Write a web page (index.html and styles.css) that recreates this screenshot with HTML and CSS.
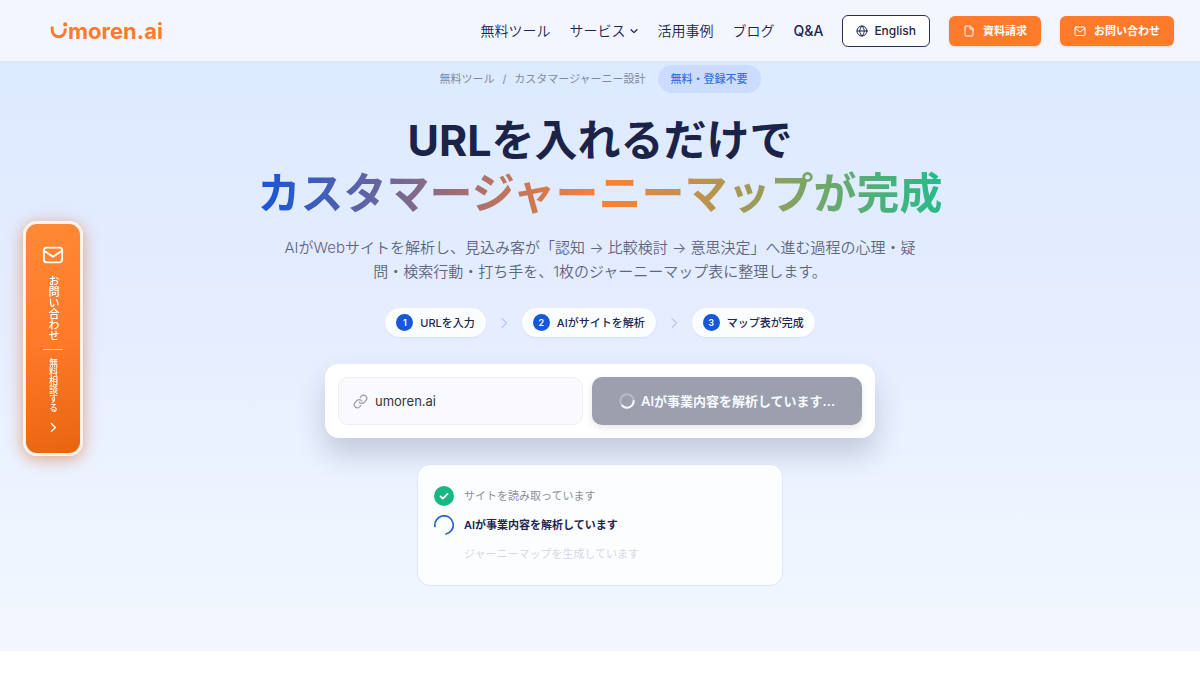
FILE: index.html
```html
<!DOCTYPE html>
<html lang="ja">
<head>
<meta charset="utf-8">
<meta name="viewport" content="width=device-width, initial-scale=1">
<title>カスタマージャーニー設計 | umoren.ai</title>
<link rel="stylesheet" href="styles.css">
</head>
<body>
<header class="header">
  <a class="logo" href="#" aria-label="umoren.ai">
    <svg class="logo-mark" viewBox="0 0 18 18" aria-hidden="true"><path class="logo-curve" d="M2.200 4.500v3.800a6.500 6.500 0 0 0 13 0V6.500"/><circle cx="15.200" cy="2.400" r="2.100" fill="currentColor"/></svg>
    <span>moren.ai</span>
  </a>
  <nav class="nav" aria-label="メイン">
    <a href="#">無料ツール</a>
    <a class="has-menu" href="#">サービス<svg class="icon-caret" viewBox="0 0 24 24" aria-hidden="true"><path d="m5 9 7 7 7-7"/></svg></a>
    <a href="#">活用事例</a>
    <a href="#">ブログ</a>
    <a class="latin" href="#">Q&amp;A</a>
    <a class="btn btn-outline" href="#"><svg viewBox="0 0 24 24" aria-hidden="true"><circle cx="12" cy="12" r="10"/><path d="M2 12h20M12 2c-6 5.500-6 14.500 0 20M12 2c6 5.500 6 14.500 0 20"/></svg>English</a>
    <a class="btn btn-orange" href="#"><svg viewBox="0 0 24 24" aria-hidden="true"><path d="M14 2H6a2 2 0 0 0-2 2v16a2 2 0 0 0 2 2h12a2 2 0 0 0 2-2V8zM14 2v6h6"/></svg>資料請求</a>
    <a class="btn btn-orange" href="#"><svg viewBox="0 0 24 24" aria-hidden="true"><rect x="2" y="4" width="20" height="17" rx="2"/><path d="m3 7 9 7 9-7"/></svg>お問い合わせ</a>
  </nav>
</header>

<main class="hero">
  <div class="crumbs">
    <a href="#">無料ツール</a><span>/</span><span>カスタマージャーニー設計</span><strong class="badge">無料・登録不要</strong>
  </div>
  <h1 class="title">URLを入れるだけで<br><span class="title-gradient">カスタマージャーニーマップが完成</span></h1>
  <p class="lead">AIがWebサイトを解析し、見込み客が「認知 → 比較検討 → 意思決定」へ進む過程の心理・疑問・検索行動・打ち手を、1枚のジャーニーマップ表に整理します。</p>
  <ol class="steps">
    <li class="step"><b>1</b>URLを入力</li>
    <li class="arrow" aria-hidden="true"><svg viewBox="0 0 24 24"><path d="m8 3 9 9-9 9"/></svg></li>
    <li class="step"><b>2</b>AIがサイトを解析</li>
    <li class="arrow" aria-hidden="true"><svg viewBox="0 0 24 24"><path d="m8 3 9 9-9 9"/></svg></li>
    <li class="step"><b>3</b>マップ表が完成</li>
  </ol>
  <form class="form">
    <label class="field">
      <svg viewBox="0 0 24 24" aria-hidden="true"><path d="M10 13a5 5 0 0 0 7.540.540l3-3a5 5 0 0 0-7.070-7.070l-1.720 1.710M14 11a5 5 0 0 0-7.540-.540l-3 3a5 5 0 0 0 7.070 7.070l1.710-1.710"/></svg>
      <input type="text" value="umoren.ai" aria-label="サイトURL">
    </label>
    <button class="submit" type="button"><svg viewBox="0 0 24 24" aria-hidden="true"><circle cx="12" cy="12" r="10" opacity=".3"/><path d="M22 12a10 10 0 0 1-17 7"/></svg>AIが事業内容を解析しています...</button>
  </form>
  <ul class="progress">
    <li class="done"><svg viewBox="0 0 20 20" aria-hidden="true"><circle cx="10" cy="10" r="10" fill="#18b881" stroke="none"/><path d="m6.500 10.300 2.300 2.300 4.800-4.800" stroke="#fff" stroke-width="1.700"/></svg>サイトを読み取っています</li>
    <li class="current"><svg viewBox="0 0 20 20" aria-hidden="true"><path d="M1 11.500A9.200 9.200 0 1 1 12 19" stroke="#2563cf" stroke-width="1.700"/></svg>AIが事業内容を解析しています</li>
    <li class="waiting"><svg viewBox="0 0 20 20" aria-hidden="true"></svg>ジャーニーマップを生成しています</li>
  </ul>
</main>

<a class="contact" href="#">
  <svg class="contact-mail" viewBox="0 0 24 24" aria-hidden="true"><rect x="2" y="4" width="20" height="16" rx="3"/><path d="m3 8 9 6 9-6"/></svg>
  <span class="contact-main">お問い合わせ</span>
  <span class="contact-sub">無料相談する</span>
  <svg class="contact-arrow" viewBox="0 0 24 24" aria-hidden="true"><path d="m7 3 9 9-9 9"/></svg>
</a>
</body>
</html>
```
FILE: styles.css
```css
* { box-sizing: border-box; }

body {
  margin: 0;
  background: #fff;
  color: #1e2550;
  font-family: Inter, "Noto Sans CJK JP", sans-serif;
}

a { color: inherit; text-decoration: none; }

svg {
  flex: none;
  fill: none;
  stroke: currentColor;
  stroke-width: 2;
  stroke-linecap: round;
  stroke-linejoin: round;
}

.header {
  display: flex;
  align-items: center;
  justify-content: space-between;
  height: 62px;
  padding: 0 26px 0 50px;
  background: #f3f6ff;
  border-bottom: 1px solid #e4e7f3;
}

.logo {
  display: flex;
  align-items: center;
  color: #ff7a2d;
  font-size: 22px;
  font-weight: 700;
  line-height: 28px;
}

.logo-mark { width: 18px; height: 18px; stroke: none; }
.logo-curve { stroke: currentColor; stroke-width: 3; stroke-linecap: butt; }

.nav {
  display: flex;
  align-items: center;
  gap: 19px;
  font-size: 14px;
  font-weight: 350;
  line-height: 20px;
  white-space: nowrap;
}

.nav .latin { font-weight: 500; }
.has-menu { display: flex; align-items: center; gap: 3px; }
.icon-caret { width: 10px; height: 10px; stroke-width: 3; }

.btn {
  display: flex;
  align-items: center;
  justify-content: center;
  gap: 8px;
  height: 30px;
  padding: 0 14px;
  border-radius: 6px;
  font-size: 11px;
  font-weight: 600;
}

.btn svg { width: 12px; height: 12px; }
.btn-outline { height: 32px; padding: 0 13px; background: #fff; border: 1px solid #2b3058; font-size: 12px; font-weight: 500; gap: 6px; }
.btn-orange { background: #ff7a2a; color: #fff; box-shadow: 0 1px 2px #c85a1a40; }

.hero {
  display: flex;
  flex-direction: column;
  align-items: center;
  padding: 3px 24px 65px;
  background: linear-gradient(180deg, #dceaff 0%, #e6edff 45%, #eef5ff 80%, #f2f6ff 100%);
}

.crumbs {
  display: flex;
  align-items: center;
  gap: 8px;
  font-size: 11px;
  line-height: 28px;
  color: #8089a0;
}

.badge {
  margin-left: 4px;
  padding: 0 13px;
  border-radius: 14px;
  background: #cbdcff;
  color: #3472e4;
  font-weight: 500;
}

.title {
  margin: 21px 0 0;
  color: #1b2348;
  font-size: 43px;
  font-weight: 700;
  line-height: 53px;
  text-align: center;
}

.title-gradient {
  background: linear-gradient(90deg, #1556d8, #ff802f 50%, #24bc8a);
  background-clip: text;
  color: transparent;
}

.lead {
  max-width: 640px;
  margin: 16px 0 0;
  color: #5d667e;
  font-size: 15px;
  font-weight: 350;
  line-height: 24px;
  text-align: center;
}

.steps {
  display: flex;
  align-items: center;
  gap: 12px;
  margin: 24px 0 0;
  padding: 0;
  list-style: none;
}

.step {
  display: flex;
  align-items: center;
  gap: 7px;
  height: 29px;
  padding: 0 11px;
  border-radius: 15px;
  background: #fbfdff;
  font-size: 11px;
  font-weight: 500;
  line-height: 16px;
  box-shadow: 0 1px 2px #3c50a014;
}

.step b {
  width: 17px;
  border-radius: 50%;
  background: #1658d8;
  color: #fff;
  font-size: 9px;
  font-weight: 600;
  line-height: 17px;
  text-align: center;
}

.arrow { display: flex; color: #93afea; }
.arrow svg { width: 12px; height: 12px; }

.form {
  display: flex;
  gap: 9px;
  width: 100%;
  max-width: 550px;
  margin: 27px 0 0;
  padding: 13px;
  border-radius: 14px;
  background: #fff;
  box-shadow: 0 16px 28px #30405c38;
}

.field {
  display: flex;
  align-items: center;
  gap: 7px;
  flex: 1;
  min-width: 0;
  height: 48px;
  padding: 0 14px;
  border: 1px solid #eeeff5;
  border-radius: 10px;
  background: #fafafe;
  color: #9a9da8;
}

.field svg { width: 15px; height: 15px; }

.field input {
  min-width: 0;
  flex: 1;
  padding: 0;
  border: 0;
  outline: 0;
  background: none;
  color: #33363d;
  font: 400 13px/20px Inter, sans-serif;
}

.submit {
  display: flex;
  align-items: center;
  justify-content: center;
  gap: 6px;
  flex: 0 1 270px;
  height: 48px;
  padding: 0;
  border: 0;
  border-radius: 10px;
  background: #9ca0ae;
  color: #f8faff;
  font: 600 13px/20px Inter, "Noto Sans CJK JP", sans-serif;
  white-space: nowrap;
  box-shadow: 0 3px 6px #40406020;
}

.submit svg { width: 16px; height: 16px; stroke-width: 3; }

.progress {
  display: flex;
  flex-direction: column;
  gap: 9px;
  width: 100%;
  max-width: 366px;
  margin: 26px 0 0;
  padding: 21px 16px;
  border: 1px solid #dfe7f5;
  border-radius: 13px;
  background: #fcfdff;
  font-size: 11px;
  line-height: 20px;
  list-style: none;
}

.progress li { display: flex; align-items: center; gap: 10px; }
.progress svg { width: 20px; height: 20px; }
.done { color: #8c8f98; }
.current { font-weight: 600; }
.waiting { color: #d6d8df; }

.contact {
  position: fixed;
  top: 221px;
  left: 23px;
  display: flex;
  flex-direction: column;
  align-items: center;
  width: 60px;
  padding: 20px 0;
  border: 3px solid #fff3ea;
  border-radius: 14px;
  background: linear-gradient(165deg, #ff8935, #ff7a29 50%, #e76510);
  color: #fff;
  box-shadow: 0 3px 16px #d8662c90;
}

.contact-main, .contact-sub { writing-mode: vertical-rl; }
.contact-main { margin-top: 9px; font-size: 11px; font-weight: 500; line-height: 16px; }

.contact-sub {
  margin-top: 8px;
  font-size: 9px;
  font-weight: 500;
  line-height: 20px;
  padding-top: 8px;
  border-top: 1px solid #ffd0aa;
}

.contact-mail { width: 22px; height: 22px; }
.contact-arrow { width: 11px; height: 11px; margin-top: 10px; stroke-width: 3; }
```
